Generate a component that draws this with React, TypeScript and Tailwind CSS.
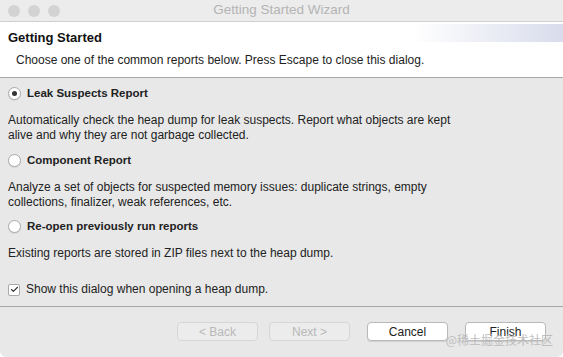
import { Check } from "lucide-react"

const Radio = ({ checked, label }: { checked?: boolean; label: string }) => (
  <div className="flex items-center gap-[6px]">
    <span className="flex h-[13px] w-[13px] items-center justify-center rounded-full border border-[#a9a9a9] bg-white shadow-[0_1px_1px_rgba(0,0,0,0.08)]">
      {checked ? <span className="h-[5px] w-[5px] rounded-full bg-[#333]" /> : null}
    </span>
    <span className="text-[11.5px] font-bold text-[#222]">{label}</span>
  </div>
)

const Button = ({ label, disabled }: { label: string; disabled?: boolean }) => (
  <button
    disabled={disabled}
    className={
      disabled
        ? "h-[19px] w-[81px] rounded-[4px] border border-[#d6d6d6] bg-[#ececec] text-[12px] text-[#b8b8b8]"
        : "h-[19px] w-[81px] rounded-[4px] border border-[#b9b9b9] bg-white text-[12px] text-[#222] shadow-[0_1px_1px_rgba(0,0,0,0.1)]"
    }
  >
    {label}
  </button>
)

export default function App() {
  return (
    <div className="h-[357px] w-[563px] bg-white font-['Liberation_Sans',sans-serif]">
      <div className="flex h-full w-full flex-col overflow-hidden rounded-b-[6px] bg-[#e8e8e8]">
        <div className="relative flex h-[22px] shrink-0 items-center border-b border-[#d0d0d0] bg-[#ececec]">
          <div className="flex gap-[8px] pl-[8px]">
            <span className="h-[12px] w-[12px] rounded-full bg-[#d3d3d3]" />
            <span className="h-[12px] w-[12px] rounded-full bg-[#d3d3d3]" />
            <span className="h-[12px] w-[12px] rounded-full bg-[#d3d3d3]" />
          </div>
          <span className="absolute inset-x-0 text-center text-[13.5px] text-[#b4b4b4]">Getting Started Wizard</span>
        </div>

        <div className="relative h-[56px] shrink-0 border-b border-[#a6a6a6] bg-white">
          <div className="absolute right-0 top-[2px] h-[18px] w-[150px] bg-gradient-to-r from-white to-[#d9dcec]" />
          <div className="relative px-[8px] pt-[6px]">
            <div className="text-[13px] font-bold text-[#111]">Getting Started</div>
            <div className="mt-[3px] pl-[8px] text-[12px] text-[#222]">
              Choose one of the common reports below. Press Escape to close this dialog.
            </div>
          </div>
        </div>

        <div className="flex flex-1 flex-col px-[8px] pt-[8px] text-[12px] leading-[15px] text-[#222]">
          <Radio checked label="Leak Suspects Report" />
          <p className="mt-[12px]">
            Automatically check the heap dump for leak suspects. Report what objects are kept
            <br />
            alive and why they are not garbage collected.
          </p>
          <div className="mt-[10px]">
            <Radio label="Component Report" />
          </div>
          <p className="mt-[12px]">
            Analyze a set of objects for suspected memory issues: duplicate strings, empty
            <br />
            collections, finalizer, weak references, etc.
          </p>
          <div className="mt-[9px]">
            <Radio label="Re-open previously run reports" />
          </div>
          <p className="mt-[12px]">Existing reports are stored in ZIP files next to the heap dump.</p>
          <div className="mt-[21px] flex items-center gap-[6px]">
            <span className="flex h-[12px] w-[12px] items-center justify-center rounded-[2px] border border-[#a9a9a9] bg-white">
              <Check size={9} strokeWidth={3} className="text-[#333]" />
            </span>
            <span>Show this dialog when opening a heap dump.</span>
          </div>
        </div>

        <div className="relative flex h-[51px] shrink-0 items-start justify-end gap-[17px] border-t border-[#a6a6a6] pr-[17px] pt-[15px]">
          <div className="flex gap-[11px]">
            <Button label="< Back" disabled />
            <Button label="Next >" disabled />
          </div>
          <Button label="Cancel" />
          <Button label="Finish" />
          <span className="absolute right-[10px] top-[24px] font-['Noto_Sans_CJK_SC',sans-serif] text-[12px] text-[#b9b9b9] opacity-90">
            @稀土掘金技术社区
          </span>
        </div>
      </div>
    </div>
  )
}
